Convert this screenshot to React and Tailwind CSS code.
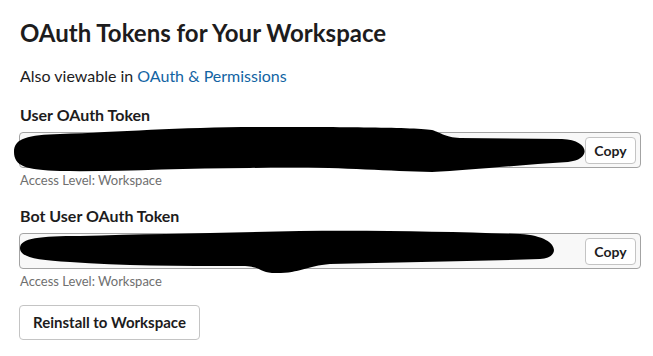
import React from 'react';

const TokenField = ({ label }) => (
    <div className="flex flex-col">
        <div className="text-[16px] leading-[22px] font-bold text-[#1d1c1d]">{label}</div>
        <div className="mt-[6px] ml-[-1px] w-[622px] h-[36px] flex items-center justify-end pr-[4px] bg-[#f8f8f8] border border-[#a3a3a3] rounded-[4px]">
            <button className="w-[51px] h-[27px] bg-white border border-[#c4c4c4] rounded-[4px] text-[14px] font-bold text-[#1d1c1d]">
                Copy
            </button>
        </div>
        <div className="mt-[4px] text-[13px] leading-[16px] text-[#6f6f6f]">Access Level: Workspace</div>
    </div>
);

export default function App() {
    return (
        <div className="relative w-[653px] h-[356px] bg-white pl-[20px] pt-[17px]" style={{ fontFamily: 'Lato, "Noto Sans", sans-serif' }}>
            <h1 className="text-[24px] leading-[32px] font-bold text-[#1d1c1d]">OAuth Tokens for Your Workspace</h1>
            <p className="mt-[16px] text-[16px] leading-[22px] text-[#1d1c1d]">
                Also viewable in <a className="text-[#1264a3]">OAuth &amp; Permissions</a>
            </p>

            <div className="mt-[17px]">
                <TokenField label="User OAuth Token" />
            </div>
            <div className="mt-[17px]">
                <TokenField label="Bot User OAuth Token" />
            </div>

            <button className="mt-[16px] ml-[-1px] w-[181px] h-[35px] bg-white border border-[#c4c4c4] rounded-[4px] text-[15px] font-bold text-[#1d1c1d]">
                Reinstall to Workspace
            </button>

            {/* redaction scribbles */}
            <svg className="absolute left-0 top-0 pointer-events-none" width="653" height="356" viewBox="0 0 653 356">
                <path fill="#000" d="M14 152 C14 138 28 135 60 134 C120 132 180 127 260 127 C330 127 410 127 432 130 C442 133 444 137 460 138 L562 139 C590 140 592 160 568 162 C520 165 470 170 432 172 C380 171 330 166 250 168 C180 168 120 172 60 171 C26 170 14 166 14 152 Z" />
                <path fill="#000" d="M20 248 C20 238 40 236 80 236 C150 234 220 233 300 231 C380 230 460 232 520 234 C560 236 562 258 540 259 C480 261 400 262 330 264 C305 266 300 274 272 273 C258 272 262 266 240 266 C180 266 120 266 70 262 C35 260 20 257 20 248 Z" />
            </svg>
        </div>
    );
}
